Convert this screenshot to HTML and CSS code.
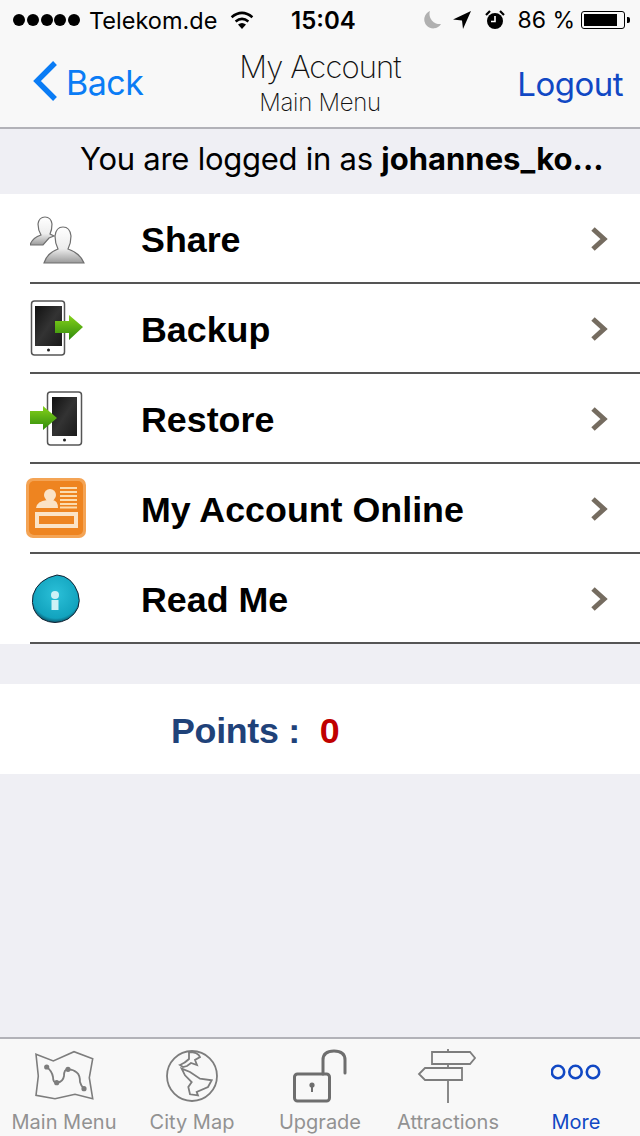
FILE: index.html
```html
<!DOCTYPE html>
<html lang="en">
<head>
<meta charset="UTF-8" />
<title>My Account</title>
<link rel="stylesheet" href="styles.css">
</head>
<body>
<header class="top">
  <div class="status">
    <div class="status-left">
      <span class="dots"><i></i><i></i><i></i><i></i><i></i></span>
      <span class="carrier">Telekom.de</span>
      <svg class="wifi" width="26" height="20" viewBox="0 0 26 20"><path d="M13 19 L9 14.5 Q13 11.5 17 14.5 Z" fill="#000"/><path d="M6.6 11.4 Q13 6.4 19.4 11.4" fill="none" stroke="#000" stroke-width="2.6"/><path d="M2.6 7.2 Q13 -1.4 23.4 7.2" fill="none" stroke="#000" stroke-width="2.6"/></svg>
    </div>
    <div class="clock">15:04</div>
    <div class="status-right">
      <svg class="moon" width="20" height="20" viewBox="0 0 20 20"><path d="M8 1 A9 9 0 1 0 19 14 A10 10 0 0 1 8 1 Z" fill="#b0b0b0"/></svg>
      <svg class="arrow" width="20" height="20" viewBox="0 0 20 20"><path d="M19 1 L1 9.5 L10 10.5 L11 19 Z" fill="#000"/></svg>
      <svg class="alarm" width="20" height="20" viewBox="0 0 20 20"><circle cx="10" cy="11" r="8" fill="#000"/><path d="M10 6 V11.5 H6" fill="none" stroke="#fff" stroke-width="1.6"/><path d="M1 5 L5 1 M15 1 L19 5" stroke="#000" stroke-width="2.2"/></svg>
      <span class="battery-text">86 %</span>
      <span class="battery"><span class="battery-fill"></span></span>
    </div>
  </div>
  <nav class="navbar">
    <a class="back">
      <svg width="28" height="42" viewBox="0 0 28 42"><path d="M24 3 L6 21 L24 39" fill="none" stroke="#0a7cf5" stroke-width="5.4"/></svg>
      <span>Back</span>
    </a>
    <div class="title">
      <div class="title-main">My Account</div>
      <div class="title-sub">Main Menu</div>
    </div>
    <a class="logout">Logout</a>
  </nav>
</header>

<main class="content">
  <div class="login">You are logged in as <b>johannes_ko...</b></div>

  <ul class="menu">
    <li class="row">
      <span class="row-icon">
        <svg width="60" height="52" viewBox="0 0 60 52">
          <defs><linearGradient id="body" x1="0" y1="0" x2="0" y2="1"><stop offset="0" stop-color="#fff"/><stop offset=".6" stop-color="#ededed"/><stop offset="1" stop-color="#9a9a9a"/></linearGradient></defs>
          <g fill="url(#body)" stroke="#6f6f6f" stroke-width="1.2">
            <path d="M0 33 Q2 26 11 23 Q8 18 8 12 Q9 5 15 5 Q21 5 22 12 Q22 18 20 22 L24 24 L19 26 L13 33 Z"/>
            <path d="M14 51 Q17 41 28 37 Q25 31 25 24 Q26 15 33 15 Q40 15 41 24 Q41 31 38 37 Q50 41 54 51 Z"/>
          </g>
        </svg>
      </span>
      <span class="row-label">Share</span>
      <svg class="chev" width="20" height="26" viewBox="0 0 20 26"><path d="M3 3 L14 13 L3 23" fill="none" stroke="#756c60" stroke-width="5"/></svg>
    </li>
    <li class="row">
      <span class="row-icon">
        <svg width="60" height="56" viewBox="0 0 60 56">
          <defs>
            <linearGradient id="arr" x1="0" y1="0" x2="0" y2="1"><stop offset="0" stop-color="#86d31a"/><stop offset="1" stop-color="#2f8a0c"/></linearGradient>
            <linearGradient id="screen" x1="0" y1="0" x2="1" y2="1"><stop offset="0" stop-color="#111"/><stop offset=".5" stop-color="#333"/><stop offset="1" stop-color="#1a1a1a"/></linearGradient>
          </defs>
          <rect x="1.500" y="1" width="33" height="54" rx="3" fill="#fff" stroke="#555" stroke-width="1.500"/>
          <rect x="5" y="6" width="27" height="40" fill="url(#screen)"/>
          <circle cx="18.500" cy="50" r="1.500" fill="#222"/>
          <path d="M25 21 H39 V15 L53 27 L39 40 V33 H25 Z" fill="url(#arr)"/>
        </svg>
      </span>
      <span class="row-label">Backup</span>
      <svg class="chev" width="20" height="26" viewBox="0 0 20 26"><path d="M3 3 L14 13 L3 23" fill="none" stroke="#756c60" stroke-width="5"/></svg>
    </li>
    <li class="row">
      <span class="row-icon">
        <svg width="60" height="56" viewBox="0 0 60 56">
          <rect x="17.500" y="2" width="34" height="53" rx="3" fill="#fff" stroke="#555" stroke-width="1.500"/>
          <rect x="22" y="7" width="25" height="39" fill="url(#screen)"/>
          <circle cx="34.500" cy="50" r="1.500" fill="#222"/>
          <path d="M0 21 H13 V16 L27 28 L13 40 V34 H0 Z" fill="url(#arr)"/>
        </svg>
      </span>
      <span class="row-label">Restore</span>
      <svg class="chev" width="20" height="26" viewBox="0 0 20 26"><path d="M3 3 L14 13 L3 23" fill="none" stroke="#756c60" stroke-width="5"/></svg>
    </li>
    <li class="row">
      <span class="row-icon row-icon-account">
        <svg width="60" height="60" viewBox="0 0 60 60">
          <rect width="60" height="60" rx="7" fill="#f4a455"/>
          <rect x="3" y="3" width="54" height="54" rx="5" fill="#ee8420"/>
          <circle cx="24" cy="17" r="6" fill="#fbe3c6"/>
          <path d="M10 30 Q11 23 21 22 H27 Q32 23 32 30 Z" fill="#fbe3c6"/>
          <path d="M34 10 H51 M34 14 H51 M34 18 H51 M34 22 H51 M34 26 H51 M34 29.500 H51" stroke="#fbdcb0" stroke-width="2"/>
          <rect x="11" y="36" width="39" height="12" fill="#ee8420" stroke="#fbe3c6" stroke-width="4"/>
        </svg>
      </span>
      <span class="row-label">My Account Online</span>
      <svg class="chev" width="20" height="26" viewBox="0 0 20 26"><path d="M3 3 L14 13 L3 23" fill="none" stroke="#756c60" stroke-width="5"/></svg>
    </li>
    <li class="row">
      <span class="row-icon">
        <svg width="60" height="54" viewBox="0 0 60 54">
          <defs><radialGradient id="info" cx=".5" cy=".4" r=".6"><stop offset="0" stop-color="#2bc0d8"/><stop offset=".85" stop-color="#12a3be"/><stop offset="1" stop-color="#0a5a70"/></radialGradient></defs>
          <path d="M27 4 Q42 5 48 22 Q53 38 38 48 Q25 55 12 48 Q0 40 3 24 Q8 8 27 4 Z" fill="url(#info)" stroke="#123" stroke-width="1"/>
          <circle cx="25" cy="24" r="4" fill="#cdf1f6"/>
          <path d="M21.500 29 H28.500 V39 H21.500 Z" fill="#cdf1f6"/>
        </svg>
      </span>
      <span class="row-label">Read Me</span>
      <svg class="chev" width="20" height="26" viewBox="0 0 20 26"><path d="M3 3 L14 13 L3 23" fill="none" stroke="#756c60" stroke-width="5"/></svg>
    </li>
  </ul>

  <div class="points">
    <span class="points-label">Points :</span>
    <span class="points-value">0</span>
  </div>
</main>

<footer class="tabs">
  <div class="tab">
    <svg width="62" height="54" viewBox="0 0 62 54" fill="none" stroke="#7d7d7d" stroke-width="1.600">
      <path d="M3 5.300 L20.300 12 L41 2.700 L59.700 9.700 L56.300 28.700 L59.700 49.700 L42 45.300 L22 49.700 L3 46.300 L5.300 27 Z"/>
      <path d="M13.700 18 Q19 22 20 28 Q20 34 24 33.700 Q30 33 31 27 Q31 20 35 20.300 Q40 20 44 23.700 Q47 26 47 33 Q48 37 51 39.700" stroke-width="1.800"/>
      <circle cx="13.700" cy="18" r="1.800" fill="#7d7d7d"/><circle cx="23.700" cy="33.700" r="1.800" fill="#7d7d7d"/><circle cx="35" cy="20.300" r="1.800" fill="#7d7d7d"/><circle cx="51" cy="39.700" r="1.800" fill="#7d7d7d"/>
    </svg>
    <span>Main Menu</span>
  </div>
  <div class="tab">
    <svg width="54" height="54" viewBox="0 0 54 54" fill="none" stroke="#7d7d7d" stroke-width="1.800">
      <circle cx="27" cy="27" r="25"/>
      <path d="M24 3 Q33 3 35 8 L30 11 L32 16 L26 14 L22 17 L18 18 L15 16 Q20 14 24 10 Z"/>
      <path d="M16.700 19.700 L25 23 L35 29.700 L46.700 31.300 L43 38 L31.700 43 L33 46.300 L25 45.300 L23.300 38 L26.700 33 L20 26.300 Z"/>
    </svg>
    <span>City Map</span>
  </div>
  <div class="tab">
    <svg width="62" height="54" viewBox="0 0 62 54" fill="none" stroke="#6e6e6e" stroke-width="3">
      <rect x="5.500" y="25" width="35" height="27" rx="3"/>
      <path d="M34 25 V11 Q34 2 45 2 Q56 2 56 11 V24" stroke-linecap="round"/>
      <circle cx="23" cy="36" r="2.600" fill="#6e6e6e" stroke="none"/><path d="M23 34 V43" stroke-width="2"/>
    </svg>
    <span>Upgrade</span>
  </div>
  <div class="tab">
    <svg width="62" height="54" viewBox="0 0 62 54" fill="none" stroke="#7d7d7d" stroke-width="1.800">
      <path d="M31 0 V3 M31 15 V19 M31 31 V54"/>
      <path d="M15 3 H53 L58 9 L53 15 H15 Z"/>
      <path d="M45 19 H8 L2 25 L8 31 H45 Z"/>
    </svg>
    <span>Attractions</span>
  </div>
  <div class="tab tab-active">
    <svg width="50" height="54" viewBox="0 0 50 54" fill="none" stroke="#1148c4" stroke-width="2.600">
      <circle cx="7" cy="23" r="6.200"/><circle cx="24.500" cy="23" r="6.200"/><circle cx="42" cy="23" r="6.200"/>
    </svg>
    <span>More</span>
  </div>
</footer>
</body>
</html>
```

FILE: styles.css
```css
*,*:before,*:after{box-sizing:border-box;}
html,body{margin:0;height:100%;}
body{width:640px;height:1136px;display:flex;flex-direction:column;background:#efeff4;color:#000;font-family:'Liberation Sans',Arial,sans-serif;overflow:hidden;}

.top{height:129px;background:#f8f8f8;border-bottom:2px solid #b2b2b8;flex-shrink:0;}
.status{height:40px;display:flex;align-items:center;justify-content:space-between;padding:0 8px 0 13px;font-family:'Inter','Liberation Sans',sans-serif;font-size:23px;position:relative;}
.status-left{display:flex;align-items:center;width:260px;}
.dots{display:flex;gap:1.75px;margin-right:9px;}
.dots i{display:block;width:12px;height:12px;border-radius:50%;background:#000;}
.carrier{font-size:23.5px;}
.wifi{margin-left:12px;}
.clock{font-weight:600;font-size:24px;position:absolute;left:291px;}
.status-right{display:flex;align-items:center;}
.moon{margin-right:10px;}
.arrow{margin-right:13px;}
.alarm{margin-right:12px;}
.battery-text{margin-right:6px;}
.battery{display:block;width:44px;height:18px;border:1.5px solid #000;border-radius:3px;padding:2px;position:relative;margin-right:7px;}
.battery:after{content:"";position:absolute;right:-6px;top:5px;width:3px;height:6px;background:#000;border-radius:0 2px 2px 0;}
.battery-fill{display:block;width:88%;height:100%;background:#000;}

.navbar{height:87px;display:flex;align-items:center;justify-content:space-between;padding:0 17px 0 31px;position:relative;}
.back{display:flex;align-items:center;gap:7px;color:#0a7cf5;font-family:'Inter','Liberation Sans',sans-serif;font-size:34px;letter-spacing:-.5px;}
.back svg{margin-top:-5px;}
.back span{margin-top:-2px;}
.logout{color:#1148c4;font-family:'Inter','Liberation Sans',sans-serif;font-size:33px;letter-spacing:-.5px;}
.title{position:absolute;left:0;right:0;top:7px;text-align:center;font-family:'Inter','Liberation Sans',sans-serif;font-weight:200;color:#111;}
.title-main{font-size:31px;line-height:40px;letter-spacing:-.9px;}
.title-sub{font-size:24px;line-height:32px;letter-spacing:-.3px;}

.content{flex:1;}
.login{height:65px;display:flex;align-items:center;padding:0 0 6px 80px;font-size:31px;letter-spacing:-.25px;font-family:'Inter','Liberation Sans',sans-serif;white-space:pre;}
.login b{font-weight:700;font-size:31px;letter-spacing:0;}
.menu{list-style:none;margin:0;padding:0;background:#fff;}
.row{height:90px;margin-left:30px;border-bottom:2px solid #555;display:flex;align-items:center;padding-right:30px;}
.row-icon{width:60px;margin-right:51px;display:flex;align-items:center;justify-content:center;}
.row-icon-account{margin-left:-4px;margin-right:55px;}
.row-label{flex:1;font-weight:700;font-size:35.8px;padding-top:4px;}
.chev{margin-top:2px;}
.points{height:90px;margin-top:40px;background:#fff;display:flex;align-items:center;padding:4px 0 0 171px;font-weight:700;font-size:35.8px;}
.points-label{color:#1f4279;letter-spacing:-.3px;}
.points-value{color:#c00000;margin-left:20px;}

.tabs{height:99px;flex-shrink:0;background:#f8f8f8;border-top:2px solid #b2b2b8;display:flex;}
.tab{flex:1;display:flex;flex-direction:column;align-items:center;color:#929292;font-family:'Inter','Liberation Sans',sans-serif;font-size:20px;padding-top:10px;gap:7px;}
.tab-active{color:#1148c4;}
```
